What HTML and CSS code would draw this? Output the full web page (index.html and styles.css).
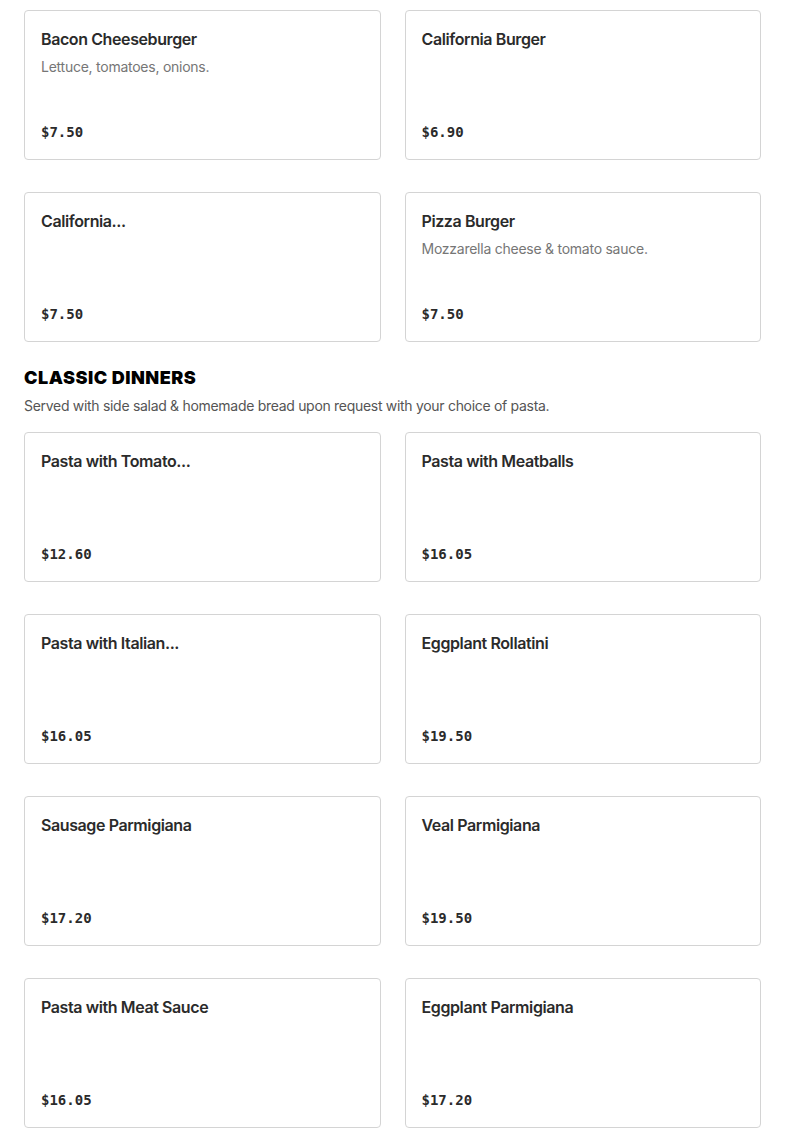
FILE: index.html
```html
<!DOCTYPE html>
<html>
<head>
<meta charset="utf-8">
<link rel="stylesheet" href="styles.css">
</head>
<body>
<main class="menu">
  <section class="section">
    <div class="grid">
      <div class="card"><div class="info"><div class="name">Bacon Cheeseburger</div><div class="desc">Lettuce, tomatoes, onions.</div></div><div class="price">$7.50</div></div>
      <div class="card"><div class="info"><div class="name">California Burger</div></div><div class="price">$6.90</div></div>
      <div class="card"><div class="info"><div class="name">California...</div></div><div class="price">$7.50</div></div>
      <div class="card"><div class="info"><div class="name">Pizza Burger</div><div class="desc">Mozzarella cheese &amp; tomato sauce.</div></div><div class="price">$7.50</div></div>
    </div>
  </section>
  <section class="section">
    <h2 class="heading">CLASSIC DINNERS</h2>
    <p class="subtitle">Served with side salad &amp; homemade bread upon request with your choice of pasta.</p>
    <div class="grid">
      <div class="card"><div class="info"><div class="name">Pasta with Tomato...</div></div><div class="price">$12.60</div></div>
      <div class="card"><div class="info"><div class="name">Pasta with Meatballs</div></div><div class="price">$16.05</div></div>
      <div class="card"><div class="info"><div class="name">Pasta with Italian...</div></div><div class="price">$16.05</div></div>
      <div class="card"><div class="info"><div class="name">Eggplant Rollatini</div></div><div class="price">$19.50</div></div>
      <div class="card"><div class="info"><div class="name">Sausage Parmigiana</div></div><div class="price">$17.20</div></div>
      <div class="card"><div class="info"><div class="name">Veal Parmigiana</div></div><div class="price">$19.50</div></div>
      <div class="card"><div class="info"><div class="name">Pasta with Meat Sauce</div></div><div class="price">$16.05</div></div>
      <div class="card"><div class="info"><div class="name">Eggplant Parmigiana</div></div><div class="price">$17.20</div></div>
    </div>
  </section>
</main>
</body>
</html>
```
FILE: styles.css
```css
html, body {
  margin: 0;
  padding: 0;
  background: #fff;
}
body {
  font-family: Inter, "Noto Sans", "Liberation Sans", sans-serif;
  color: #2b2b2b;
}
.menu {
  padding: 10px 24px 0 24px;
}
.section + .section {
  margin-top: 24px;
}
.grid {
  display: grid;
  grid-template-columns: 1fr 1fr;
  column-gap: 24px;
  row-gap: 32px;
}
.card {
  box-sizing: border-box;
  height: 150px;
  border: 1px solid #d4d4d4;
  border-radius: 4px;
  padding: 16px 16px 15px 16px;
  display: flex;
  flex-direction: column;
  justify-content: space-between;
}
.name {
  font-size: 16px;
  line-height: 24px;
  font-weight: 600;
  letter-spacing: -0.4px;
  color: #2b2b2b;
}
.desc {
  margin-top: 6px;
  font-size: 14px;
  line-height: 20px;
  letter-spacing: -0.25px;
  color: #767676;
}
.price {
  font-family: "DejaVu Sans Mono", "Liberation Mono", monospace;
  font-weight: 700;
  font-size: 14px;
  line-height: 24px;
  color: #2b2b2b;
}
.heading {
  margin: 0;
  font-size: 18px;
  line-height: 24px;
  font-weight: 900;
  color: #000;
  letter-spacing: 0.5px;
}
.subtitle {
  margin: 6px 0 16px 0;
  font-size: 14px;
  line-height: 20px;
  letter-spacing: -0.3px;
  color: #555;
}
```
